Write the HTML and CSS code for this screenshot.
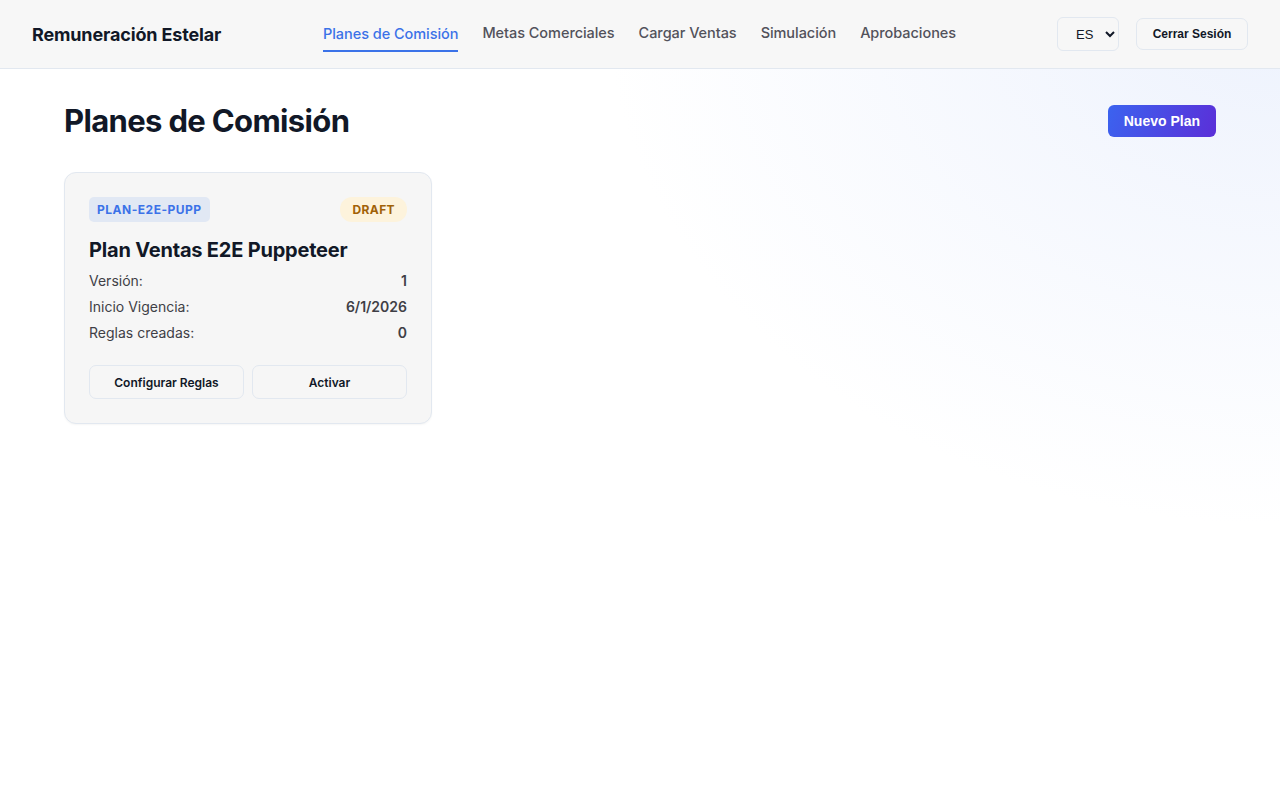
FILE: index.html
```html
<!DOCTYPE html>
<html lang="es">
<head>
  <meta charset="UTF-8">
  <meta name="viewport" content="width=device-width, initial-scale=1.0">
  <title>Remuneración Estelar - Planes de Comisión</title>
  <link rel="stylesheet" href="styles.css">
</head>
<body>
  <header class="topbar">
    <div class="brand">Remuneración Estelar</div>
    <nav class="nav">
      <a href="#" class="nav-link active">Planes de Comisión</a>
      <a href="#" class="nav-link">Metas Comerciales</a>
      <a href="#" class="nav-link">Cargar Ventas</a>
      <a href="#" class="nav-link">Simulación</a>
      <a href="#" class="nav-link">Aprobaciones</a>
    </nav>
    <div class="topbar-actions">
      <select class="lang-select">
        <option>ES</option>
        <option>EN</option>
      </select>
      <button class="btn-logout">Cerrar Sesión</button>
    </div>
  </header>

  <main class="page">
    <div class="page-head">
      <h1>Planes de Comisión</h1>
      <button class="btn-primary">Nuevo Plan</button>
    </div>

    <div class="plan-grid">
      <div class="plan-card">
        <div class="plan-card-top">
          <span class="plan-code">PLAN-E2E-PUPP</span>
          <span class="plan-status">DRAFT</span>
        </div>
        <h3 class="plan-name">Plan Ventas E2E Puppeteer</h3>
        <div class="plan-row"><span>Versión:</span><strong>1</strong></div>
        <div class="plan-row"><span>Inicio Vigencia:</span><strong>6/1/2026</strong></div>
        <div class="plan-row"><span>Reglas creadas:</span><strong>0</strong></div>
        <div class="plan-actions">
          <button class="btn-outline">Configurar Reglas</button>
          <button class="btn-outline">Activar</button>
        </div>
      </div>
    </div>
  </main>
</body>
</html>
```

FILE: styles.css
```css
* {
    box-sizing: border-box;
}

html, body {
    height: 100%;
}

body {
    margin: 0;
    font-family: Inter, "Noto Sans", sans-serif;
    color: #111827;
    background-color: #ffffff;
    background-image: radial-gradient(ellipse 900px 700px at 100% 0%, #edf2fd 0%, rgba(255, 255, 255, 0) 75%);
    background-repeat: no-repeat;
}

.topbar {
    height: 69px;
    display: flex;
    align-items: center;
    padding: 0 32px;
    background-color: #f7f7f7;
    border-bottom: 1px solid #e2e8f0;
}

.brand {
    font-size: 18px;
    font-weight: 700;
    letter-spacing: -0.15px;
    width: 291px;
}

.nav {
    display: flex;
    gap: 24px;
    height: 100%;
}

.nav-link {
    display: flex;
    align-items: center;
    font-size: 14.5px;
    font-weight: 500;
    letter-spacing: -0.05px;
    color: #52525b;
    text-decoration: none;
    height: 100%;
    padding-bottom: 1px;
    border-bottom: 2px solid transparent;
}

.nav-link.active {
    color: #3b72e8;
    height: 52px;
    padding-top: 16px;
    padding-bottom: 0;
    align-self: flex-start;
    border-bottom-color: #3b72e8;
}

.topbar-actions {
    margin-left: auto;
    display: flex;
    align-items: center;
    gap: 17px;
}

.lang-select {
    width: 62px;
    height: 34px;
    padding: 0 6px 0 14px;
    font-family: "Liberation Sans", Arial, sans-serif;
    font-size: 13px;
    color: #111827;
    background-color: #f7f7f7;
    border: 1px solid #e2e8f0;
    border-radius: 6px;
}

.btn-logout {
    width: 112px;
    height: 32px;
    padding: 0;
    font-family: "Liberation Sans", Arial, sans-serif;
    font-size: 12px;
    font-weight: 700;
    color: #111827;
    background-color: #f7f7f7;
    border: 1px solid #e2e8f0;
    border-radius: 7px;
}

.page {
    padding: 36px 64px;
}

.page-head {
    display: flex;
    justify-content: space-between;
    align-items: center;
    margin-bottom: 35px;
}

h1 {
    margin: 0;
    font-size: 31px;
    font-weight: 700;
    letter-spacing: -0.65px;
    line-height: 32px;
}

.btn-primary {
    height: 32px;
    padding: 0 16px;
    font-family: "Liberation Sans", Arial, sans-serif;
    font-size: 14px;
    font-weight: 700;
    color: #ffffff;
    background: linear-gradient(110deg, #3b63ef 0%, #5b2fd8 100%);
    border: none;
    border-radius: 6px;
}

.plan-grid {
    display: grid;
    grid-template-columns: repeat(3, 368px);
    gap: 24px;
}

.plan-card {
    background-color: #f6f6f6;
    border: 1px solid #e2e8f0;
    border-radius: 12px;
    padding: 24px;
    box-shadow: 0 1px 2px rgba(0, 0, 0, 0.04);
}

.plan-card-top {
    display: flex;
    justify-content: space-between;
    align-items: center;
}

.plan-code {
    font-size: 12px;
    font-weight: 700;
    letter-spacing: 0.5px;
    color: #3b72e8;
    background-color: #e1e8f4;
    padding: 5px 8px;
    border-radius: 5px;
}

.plan-status {
    font-size: 12px;
    font-weight: 700;
    letter-spacing: 0.4px;
    color: #a16207;
    background-color: #fdf3dc;
    padding: 5px 12px;
    border-radius: 12px;
}

.plan-name {
    margin: 15px 0 5px;
    font-size: 20px;
    font-weight: 700;
    letter-spacing: -0.2px;
    line-height: 26px;
}

.plan-row {
    display: flex;
    justify-content: space-between;
    font-size: 14px;
    line-height: 26px;
    color: #3f3f46;
}

.plan-row strong {
    font-weight: 600;
}

.plan-actions {
    display: grid;
    grid-template-columns: 1fr 1fr;
    gap: 8px;
    margin-top: 19px;
}

.btn-outline {
    height: 34px;
    font-family: Inter, "Noto Sans", sans-serif;
    font-size: 12px;
    font-weight: 600;
    color: #111827;
    background-color: #f6f6f6;
    border: 1px solid #e2e8f0;
    border-radius: 7px;
}
```
